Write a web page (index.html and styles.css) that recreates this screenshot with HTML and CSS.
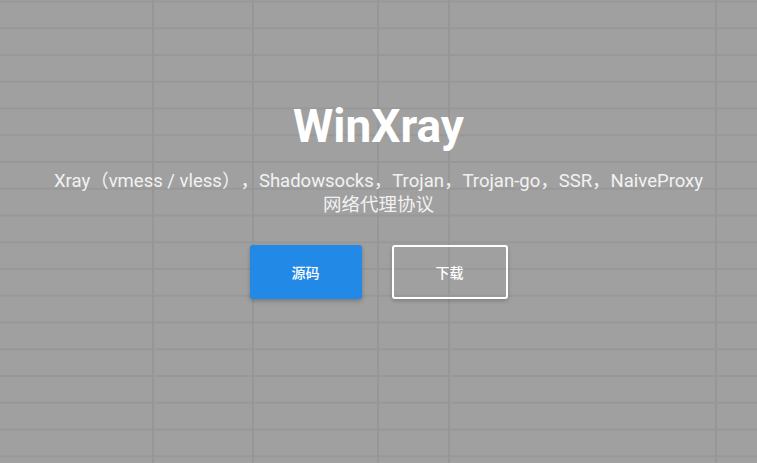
FILE: index.html
```html
<!DOCTYPE html>
<html lang="zh-CN">
<head>
<meta charset="utf-8">
<title>WinXray</title>
<link rel="stylesheet" href="styles.css">
</head>
<body>
<main class="hero">
  <h1 class="title">WinXray</h1>
  <p class="subtitle">Xray（vmess / vless），Shadowsocks，Trojan，Trojan-go，SSR，NaiveProxy<br>网络代理协议</p>
  <div class="actions">
    <a class="btn btn-primary" href="#">源码</a>
    <a class="btn btn-outline" href="#">下载</a>
  </div>
</main>
</body>
</html>
```

FILE: styles.css
```css
html, body {
  margin: 0;
  padding: 0;
}
body {
  width: 757px;
  height: 463px;
  overflow: hidden;
  font-family: Roboto, "Noto Sans CJK SC", sans-serif;
  color: #fff;
  background-color: #a0a0a0;
  background-image:
    linear-gradient(90deg, transparent 152px, #979797 152px, #979797 154px, transparent 154px),
    linear-gradient(90deg, transparent 252px, #979797 252px, #979797 254px, transparent 254px),
    linear-gradient(90deg, transparent 377px, #979797 377px, #979797 379px, transparent 379px),
    linear-gradient(90deg, transparent 448px, #979797 448px, #979797 450px, transparent 450px),
    linear-gradient(90deg, transparent 715px, #979797 715px, #979797 717px, transparent 717px),
    linear-gradient(180deg, #989898 0, #989898 2px, transparent 2px);
  background-size: 100% 100%, 100% 100%, 100% 100%, 100% 100%, 100% 100%, 100% 26.76px;
  background-repeat: no-repeat, no-repeat, no-repeat, no-repeat, no-repeat, repeat;
  background-position: 0 0, 0 0, 0 0, 0 0, 0 0, 0 0.5px;
}
.hero {
  height: 463px;
  box-sizing: border-box;
  padding-top: 99px;
  display: flex;
  flex-direction: column;
  align-items: center;
  text-align: center;
}
.title {
  margin: 0;
  font-size: 46px;
  line-height: 54px;
  font-weight: 700;
  color: #fff;
}
.subtitle {
  margin: 16px 0 0;
  max-width: 720px;
  font-size: 18.5px;
  line-height: 24px;
  font-weight: 400;
  color: #f2f2f2;
  text-spacing-trim: space-all;
}
.actions {
  margin-top: 28px;
  display: flex;
  gap: 30px;
}
.btn {
  box-sizing: border-box;
  display: flex;
  align-items: center;
  justify-content: center;
  height: 54px;
  border-radius: 3px;
  font-size: 14px;
  font-weight: 500;
  color: #fff;
  text-decoration: none;
}
.btn-primary {
  width: 112px;
  background: #2389e6;
  box-shadow: 0 2px 4px rgba(0, 0, 0, 0.25);
}
.btn-outline {
  width: 116px;
  border: 2px solid #fff;
  box-shadow: 0 2px 4px rgba(0, 0, 0, 0.2);
}
```
